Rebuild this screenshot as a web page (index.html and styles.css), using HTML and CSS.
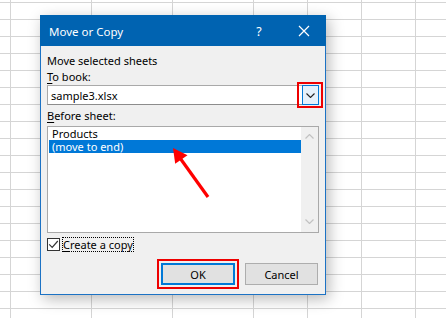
FILE: index.html
```html
<!DOCTYPE html>
<html>
<head>
<meta charset="utf-8">
<link rel="stylesheet" href="styles.css">
</head>
<body>
<div class="sheet"></div>
<div class="dialog">
  <div class="titlebar">
    <span class="title">Move or Copy</span>
    <span class="help">?</span>
    <svg class="close" width="12" height="12" viewBox="0 0 12 12"><path d="M1 1 L11 11 M11 1 L1 11" stroke="#fff" stroke-width="1.2" fill="none"/></svg>
  </div>
  <div class="content">
    <div class="label">Move selected sheets</div>
    <div class="label"><u>T</u>o book:</div>
    <div class="combo">
      <span class="combo-text">sample3.xlsx</span>
      <span class="combo-btn"><svg width="9" height="5" viewBox="0 0 9 5"><path d="M0.5 0.5 L4.5 4.5 L8.5 0.5" stroke="#222" stroke-width="1.1" fill="none"/></svg></span>
      <span class="hl hl-combo"></span>
    </div>
    <div class="label gap3"><u>B</u>efore sheet:</div>
    <div class="listbox">
      <div class="items">
        <div class="item">Products</div>
        <div class="item selected">(move to end)</div>
      </div>
      <div class="scrollbar">
        <svg width="9" height="5" viewBox="0 0 9 5"><path d="M0.5 4.5 L4.5 0.5 L8.5 4.5" stroke="#c2c2c2" stroke-width="1.2" fill="none"/></svg>
        <svg width="9" height="5" viewBox="0 0 9 5"><path d="M0.5 0.5 L4.5 4.5 L8.5 0.5" stroke="#c2c2c2" stroke-width="1.2" fill="none"/></svg>
      </div>
    </div>
    <div class="checkrow">
      <span class="checkbox"><svg width="11" height="11" viewBox="0 0 11 11"><path d="M1.2 5.4 L4.2 8.4 L9.8 2" stroke="#333" stroke-width="1.2" fill="none"/></svg></span>
      <span class="checklabel"><u>C</u>reate a copy</span>
    </div>
    <div class="buttons">
      <span class="okwrap"><button class="btn ok">OK</button></span>
      <button class="btn cancel">Cancel</button>
    </div>
  </div>
</div>
<svg class="arrow" width="446" height="318" viewBox="0 0 446 318">
  <line x1="208" y1="197" x2="180" y2="158" stroke="#ff0000" stroke-width="3.2"/>
  <polygon points="173,148 187.5,155.2 175.2,163.8" fill="#ff0000"/>
</svg>
</body>
</html>
```
FILE: styles.css
```css
html, body {
  margin: 0;
  padding: 0;
}
body {
  width: 446px;
  height: 318px;
  overflow: hidden;
  position: relative;
  background: #fff;
  font-family: "Noto Sans", "Open Sans", sans-serif;
  font-size: 11px;
  color: #000;
}
.sheet {
  position: absolute;
  inset: 0;
  background:
    linear-gradient(#d5d5d5, #d5d5d5) 10px 0 / 1px 100% no-repeat,
    linear-gradient(#d5d5d5, #d5d5d5) 91px 0 / 1px 100% no-repeat,
    linear-gradient(#d5d5d5, #d5d5d5) 172px 0 / 1px 100% no-repeat,
    linear-gradient(#d5d5d5, #d5d5d5) 253px 0 / 1px 100% no-repeat,
    linear-gradient(#d5d5d5, #d5d5d5) 307px 0 / 1px 100% no-repeat,
    linear-gradient(#d5d5d5, #d5d5d5) 361px 0 / 1px 100% no-repeat,
    linear-gradient(#d5d5d5, #d5d5d5) 415px 0 / 1px 100% no-repeat,
    linear-gradient(to bottom, #d5d5d5 0 1px, transparent 1px 17px) 0 2px / 100% 17px repeat;
}
.dialog {
  position: absolute;
  left: 40px;
  top: 15px;
  width: 286px;
  height: 280px;
  box-sizing: border-box;
  border: 1px solid #1c72c4;
  border-top-color: #0063b1;
  background: #f0f0f0;
  box-shadow: 3px 4px 14px rgba(0, 0, 0, 0.28);
  display: flex;
  flex-direction: column;
}
.titlebar {
  height: 30px;
  margin: -1px -1px 0 -1px;
  padding-top: 1px;
  background: #0063b1;
  color: #fff;
  display: flex;
  align-items: center;
  font-size: 11.5px;
}
.title {
  margin-left: 9px;
  flex: 1;
}
.help {
  width: 14px;
  text-align: center;
  margin-right: 32px;
  font-size: 12.5px;
}
.close {
  margin-right: 16px;
}
.content {
  padding: 7px 6px 0 6px;
  display: flex;
  flex-direction: column;
}
.label {
  line-height: 16px;
  height: 16px;
}
.gap3 { margin-top: 3px; }
u { text-decoration-thickness: 1px; text-underline-offset: 2px; }
.combo {
  height: 20px;
  box-sizing: border-box;
  background: #fff;
  border: 1px solid #a9a9a9;
  border-bottom-color: #8c8c8c;
  display: flex;
  align-items: center;
  position: relative;
}
.combo-text {
  flex: 1;
  padding-left: 3px;
}
.combo-btn {
  width: 17px;
  height: 20px;
  margin: -1px -1px -1px 0;
  box-sizing: border-box;
  border: 1px solid #0078d7;
  background: #e5f1fb;
  display: flex;
  align-items: center;
  justify-content: center;
}
.hl {
  position: absolute;
  border: 2px solid #ee0000;
  box-sizing: border-box;
}
.hl-combo {
  right: -5px;
  top: -4px;
  width: 26px;
  height: 26px;
}
.listbox {
  margin-top: 2px;
  height: 107px;
  box-sizing: border-box;
  background: #fff;
  border: 1px solid #a9a9a9;
  display: flex;
}
.items {
  flex: 1;
  padding: 0 0 0 1px;
}
.item {
  height: 13px;
  line-height: 13px;
  padding-left: 3px;
}
.selected {
  background: #0078d7;
  color: #fff;
}
.scrollbar {
  width: 17px;
  background: #f0f0f0;
  display: flex;
  flex-direction: column;
  align-items: center;
  justify-content: space-between;
  padding: 7px 0 8px;
}
.checkrow {
  margin-top: 3px;
  height: 16px;
  display: flex;
  align-items: center;
}
.checkbox {
  width: 13px;
  height: 13px;
  box-sizing: border-box;
  border: 1px solid #333;
  background: #fff;
  display: flex;
  align-items: center;
  justify-content: center;
}
.checklabel {
  margin-left: 2px;
  padding: 0 1px;
  height: 15px;
  line-height: 15px;
  outline: 1px dotted #000;
  outline-offset: -1px;
}
.buttons {
  margin-top: 7px;
  display: flex;
  justify-content: flex-end;
  align-items: center;
}
.okwrap {
  border: 2px solid #ee0000;
  padding: 2px;
  margin-right: 6px;
  display: flex;
}
.btn {
  font: inherit;
  width: 73px;
  height: 22px;
  box-sizing: border-box;
  background: #e1e1e1;
  border: 1px solid #adadad;
  padding: 0;
  color: #000;
}
.cancel {
  margin-right: 1px;
}
.ok {
  width: 74px;
  border: 2px solid #0078d7;
}
.arrow {
  position: absolute;
  left: 0;
  top: 0;
  pointer-events: none;
}
```
